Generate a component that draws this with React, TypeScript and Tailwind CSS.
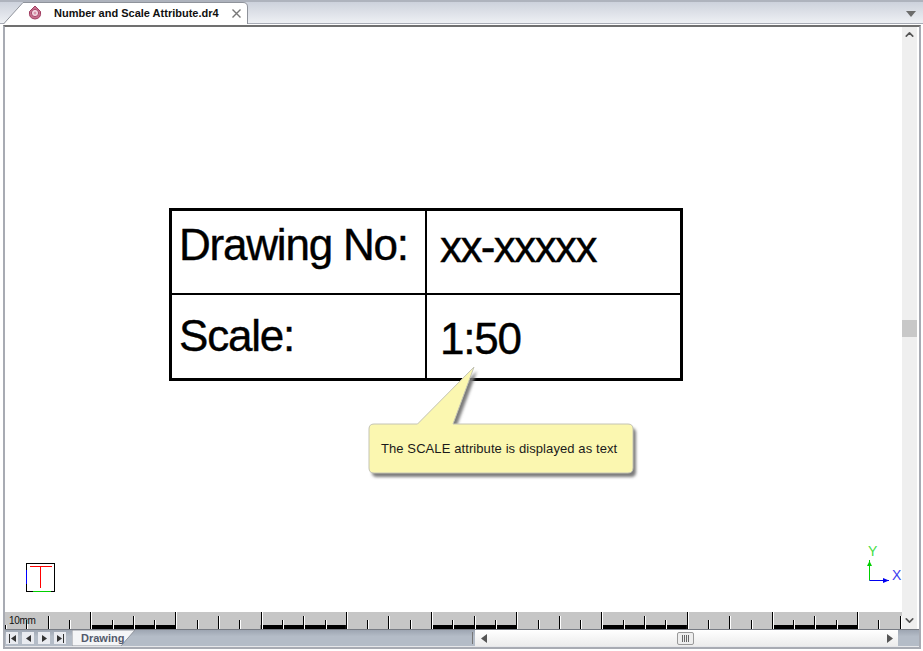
import { ChevronDown, ChevronUp } from 'lucide-react';

const sans = 'font-["Liberation_Sans",Arial,sans-serif]';

function DocIcon() {
  return (
    <svg width="14" height="15" viewBox="0 0 14 15">
      <path d="M7 1 L12.5 6.5 Q13.5 13.5 7 14 Q0.5 13.5 1.5 6.5 Z" fill="#c66f8c" stroke="#a03c60" />
      <circle cx="7" cy="8" r="3.6" fill="#f3dbe3" stroke="#a8466a" />
      <circle cx="7" cy="8" r="1.5" fill="#d995ac" />
    </svg>
  );
}

function Ruler() {
  const step = 21.3;
  const ticks = Array.from({ length: 43 }, (_, i) => i);
  return (
    <svg width="897" height="17" className="block">
      <rect width="897" height="17" fill="#c6c6c6" />
      {[85.2, 255.7, 426.2, 596.7, 767.2].map((x) => (
        <rect key={x} x={x} y="13" width="85.2" height="4" fill="#000" />
      ))}
      {ticks.map((i) => {
        const x = Math.round(i * step) + 0.5;
        const top = i === 0 ? 13 : i % 4 === 0 ? 0 : i % 2 === 0 ? 4 : 8;
        return (
          <g key={i}>
            <line x1={x} x2={x} y1={top} y2="17" stroke="#000" />
            <line x1={x + 1} x2={x + 1} y1={top} y2="17" stroke="#fff" />
          </g>
        );
      })}
    </svg>
  );
}

function NavButton({ d, bar }: { d: string; bar?: 'left' | 'right' }) {
  return (
    <div className="flex h-[12px] w-[12px] items-center justify-center bg-[#e9ebf0]">
      <svg width="9" height="9" viewBox="0 0 9 9">
        <path d={d} fill="#333" />
        {bar === 'left' && <rect x="1" y="0" width="1" height="9" fill="#333" />}
        {bar === 'right' && <rect x="7" y="0" width="1" height="9" fill="#333" />}
      </svg>
    </div>
  );
}

function Callout() {
  return (
    <div className="absolute left-[355px] top-[313px] h-[145px] w-[290px]">
      <svg width="290" height="145" className="absolute inset-0">
        <defs>
          <filter id="shade" x="-10%" y="-10%" width="120%" height="120%">
            <feGaussianBlur stdDeviation="1.5" />
          </filter>
        </defs>
        <path
          d="M14 84 L57.5 84 L114 27 L93 84 L268 84 Q273 84 273 89 L273 128 Q273 133 268 133 L14 133 Q9 133 9 128 L9 89 Q9 84 14 84 Z"
          fill="#7c7c7c"
          transform="translate(3 4)"
          filter="url(#shade)"
        />
        <path
          d="M14 84 L57.5 84 L114 27 L93 84 L268 84 Q273 84 273 89 L273 128 Q273 133 268 133 L14 133 Q9 133 9 128 L9 89 Q9 84 14 84 Z"
          fill="#fbf7b0"
          stroke="#c4c4b4"
        />
      </svg>
      <span className={`absolute left-[21px] top-[101px] text-[13px] leading-[16px] tracking-[0.09px] whitespace-nowrap text-[#1a1a1a] ${sans}`}>
        The SCALE attribute is displayed as text
      </span>
    </div>
  );
}

function Cell({ text, className }: { text: string; className: string }) {
  return (
    <div className={`flex items-start text-[44px] leading-[48px] whitespace-nowrap text-black [-webkit-text-stroke:0.4px_#000] ${sans} ${className}`}>
      {text}
    </div>
  );
}

export default function App() {
  return (
    <div className="flex h-[651px] w-[923px] flex-col overflow-hidden bg-white">
      {/* document tabs */}
      <div className="relative flex h-[24px] shrink-0 items-end border-t-2 border-b border-t-[#aeb3bd] border-b-[#a8acb6] bg-gradient-to-b from-[#cdd2dc] to-[#eef0f4]">
        <div className="relative z-10 ml-[3px] -mb-px h-[22px] w-[245px]">
          <svg width="245" height="22" className="absolute inset-0">
            <path d="M0.5 22 L20 0.5 L240 0.5 Q244.5 0.5 244.5 5 L244.5 22" fill="#fff" stroke="#8f939b" />
          </svg>
          <div className="absolute left-[25px] top-[3px]">
            <DocIcon />
          </div>
          <span className={`absolute left-[51px] top-[3px] text-[11px] leading-[16px] font-bold text-[#101010] ${sans}`}>
            Number and Scale Attribute.dr4
          </span>
          <svg width="9" height="9" viewBox="0 0 9 9" className="absolute left-[229px] top-[7px]">
            <path d="M0.5 0.5 L8.5 8.5 M8.5 0.5 L0.5 8.5" stroke="#777" strokeWidth="1.4" />
          </svg>
        </div>
        <svg width="10" height="6" className="absolute left-[906px] top-[9px]">
          <path d="M0 0 H10 L5 6 Z" fill="#6c6c6c" />
        </svg>
      </div>

      {/* document frame */}
      <div className="flex min-h-0 flex-1 flex-col pt-px pr-[2px] pb-[2px] pl-[3px]">
        <div className="flex min-h-0 flex-1 flex-col border-x-2 border-t-2 border-b-2 border-x-[#a8abb3] border-t-[#707070] border-b-[#a8abb3]">
          <div className="flex min-h-0 flex-1 pr-[2px]">
            <div className="flex min-w-0 flex-1 flex-col">
              <div className="relative min-h-0 flex-1 bg-white">
                <div className="ml-[164px] mt-[181px] grid h-[173px] w-[514px] grid-cols-[255px_1fr] grid-rows-[84px_1fr] border-[3px] border-black">
                  <Cell text="Drawing No:" className="border-r-2 border-b-2 border-black pl-[7px] pt-[10px] tracking-[-1.2px]" />
                  <Cell text="xx-xxxxx" className="border-b-2 border-black pl-[13px] pt-[12px] tracking-[-1.6px]" />
                  <Cell text="Scale:" className="border-r-2 border-black pl-[7px] pt-[17px] tracking-[-1.2px]" />
                  <Cell text="1:50" className="pl-[13px] pt-[20px] tracking-[-1.2px]" />
                </div>
                <Callout />
                {/* UCS icons */}
                <svg width="29" height="29" className="absolute left-[21px] top-[536px]">
                  <rect x="0.5" y="0.5" width="28" height="28" fill="none" stroke="#000" />
                  <path d="M4 3.5 H26 M14.5 3.5 V25" stroke="#f00" fill="none" />
                  <path d="M0.5 7 V21" stroke="#00f" />
                  <path d="M7 28.5 H25" stroke="#00d000" />
                </svg>
                <svg width="40" height="48" className="absolute left-[861px] top-[517px]">
                  <path d="M3.5 16 V36.5" stroke="#00d000" />
                  <path d="M3.5 36.5 H23" stroke="#0000f0" />
                  <path d="M3.5 17 L6 22 H1 Z" fill="#00d000" />
                  <path d="M23 36.5 L17 34 V39 Z" fill="#0000f0" />
                  <text x="2" y="12" fontSize="14" fill="#44dd44" fontFamily="Liberation Sans">Y</text>
                  <text x="26" y="36" fontSize="14" fill="#4040ee" fontFamily="Liberation Sans">X</text>
                </svg>
              </div>
              <div className="relative h-[17px] shrink-0">
                <Ruler />
                <span className={`absolute left-[4px] top-[2px] text-[10px] leading-[13px] tracking-[-0.3px] text-[#111] ${sans}`}>10mm</span>
              </div>
            </div>
            <div className="flex w-[15px] shrink-0 flex-col items-center bg-[#efefef]">
              <ChevronUp className="mt-px h-[13px] w-[13px] text-[#555]" strokeWidth={3} />
              <div className="mt-[279px] h-[17px] w-[15px] bg-[#c8c8c8]" />
              <div className="flex-1" />
              <ChevronDown className="mb-[2px] h-[13px] w-[13px] text-[#555]" strokeWidth={3} />
            </div>
          </div>

          {/* sheet tabs and scrollbar */}
          <div className="flex h-[18px] shrink-0 border-t border-b border-t-[#777b83] border-b-[#e6e7ea] bg-gradient-to-b from-[#9ea6b2] to-[#b4bcc7] to-40%">
            <div className="flex items-center gap-[4px] pl-[1px]">
              <NavButton d="M8 1 L3 4.5 L8 8 Z" bar="left" />
              <NavButton d="M7 1 L2 4.5 L7 8 Z" />
              <NavButton d="M2 1 L7 4.5 L2 8 Z" />
              <NavButton d="M1 1 L6 4.5 L1 8 Z" bar="right" />
            </div>
            <div className="relative ml-[6px] h-[16px] w-[64px]">
              <svg width="64" height="16" className="absolute inset-0">
                <path d="M0 0 H63 L49 16 H0 Z" fill="#f4f5f7" stroke="#8f939b" />
              </svg>
              <span className={`absolute left-[9px] top-[1px] text-[11px] leading-[15px] font-bold text-[#53596b] ${sans}`}>Drawing</span>
            </div>
            <div className="flex-1" />
            <div className="mr-[2px] h-[12px] w-px self-center bg-[#777]" />
            <div className="flex h-[16px] w-[423px] shrink-0 items-center bg-gradient-to-b from-white to-[#ececec] pl-[6px] pr-[5px]">
              <svg width="6" height="9"><path d="M6 0 V9 L0 4.5 Z" fill="#555" /></svg>
              <div className="ml-[190px] flex h-[13px] w-[17px] items-center justify-center gap-[1px] rounded-[2px] border border-[#999] bg-[#eee]">
                <span className="h-[7px] w-px bg-[#666]" />
                <span className="h-[7px] w-px bg-[#666]" />
                <span className="h-[7px] w-px bg-[#666]" />
                <span className="h-[7px] w-px bg-[#666]" />
              </div>
              <div className="flex-1" />
              <svg width="6" height="9"><path d="M0 0 V9 L6 4.5 Z" fill="#555" /></svg>
            </div>
            <div className="w-[21px] shrink-0" />
          </div>
        </div>
      </div>
    </div>
  );
}
